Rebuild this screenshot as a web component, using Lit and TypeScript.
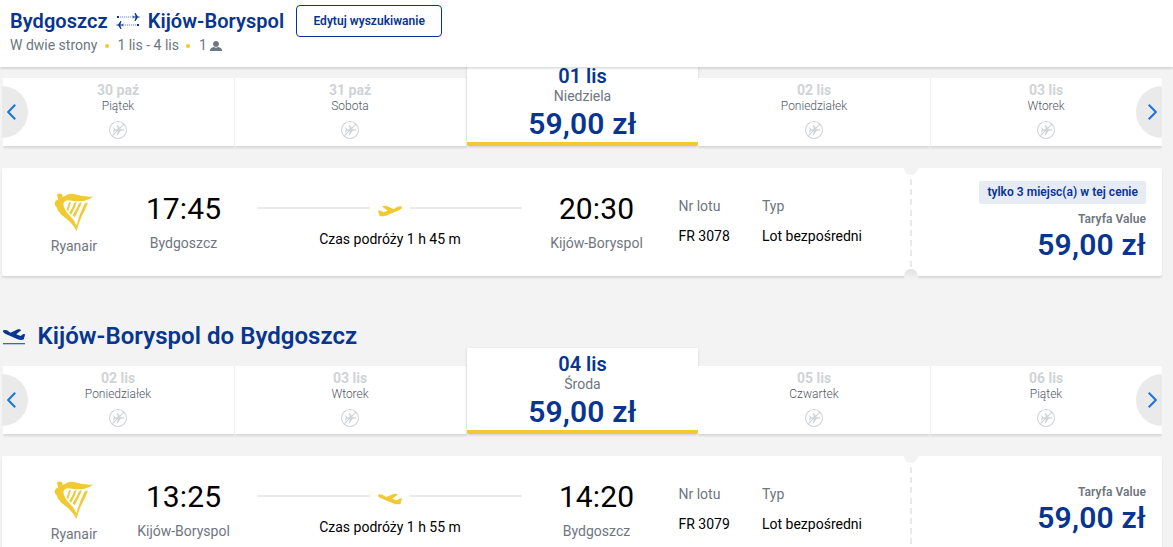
import { LitElement, html, css, svg, nothing } from "lit";
import { customElement, property } from "lit/decorators.js";
import { classMap } from "lit/directives/class-map.js";

interface Day { date: string; day: string; price?: string; }
interface Flight {
  depart: string; from: string; arrive: string; to: string;
  duration: string; no: string; price: string; left?: string; inbound?: boolean;
}

const plane = svg`<path d="M415 151L421 150L430 156L444 151L428 139L432 136L439 136L462 146L474 139Q487 136 487 142Q487 146 478 150L437 167Q427 169 420 167Z"/>`;

@customElement("date-strip")
export class DateStrip extends LitElement {
  @property({ attribute: false }) days: Day[] = [];

  static styles = css`
    :host { display: block; position: relative; width: 1160px; height: 86px; }
    .row { display: grid; grid-template-columns: 232px 232px 231px 232px 232px; align-items: end; height: 86px; padding-left: 1px; }
    .cell { height: 68px; box-sizing: border-box; background: #fff; border-right: 1px solid #f1f1f1;
      display: flex; flex-direction: column; align-items: center; padding: 4px 1px 0 0; box-shadow: 0 2px 2px rgba(0,0,0,.11); clip-path: inset(0 0 -4px 0); }
    .cell:nth-child(n+4) { border-right: none; padding-right: 0; }
    .cell:last-child { box-shadow: inset 1px 0 #f1f1f1, 0 2px 2px rgba(0,0,0,.11); }
    .date { font-size: 14px; line-height: 16px; font-weight: 700; color: #d0d3d6; }
    .day { font-size: 12px; line-height: 16px; font-weight: 300; color: #4f5865; }
    .none { width: 20px; height: 20px; margin-top: 6px; }
    .active { height: 86px; border-right: none; border-bottom: 4px solid #f1c933; padding: 6px 0 0 0; position: relative;
      box-shadow: 0 1px 3px rgba(0,0,0,.16); clip-path: none; border-radius: 0 0 2px 2px; }
    .active .date { font-size: 20px; line-height: 20px; font-weight: 600; color: #073590; }
    .active .day { font-size: 14px; line-height: 20px; font-weight: 400; color: #6e7680; }
    .price { font-size: 30px; line-height: 35px; font-weight: 600; letter-spacing: .15px; color: #073590; }
    .nav { position: absolute; top: 26px; width: 26px; height: 52px; padding: 0; border: 0; background: #eaeaea;
      display: flex; align-items: center; }
    .prev { left: 0; border-radius: 0 26px 26px 0; }
    .next { right: 0; border-radius: 26px 0 0 26px; justify-content: flex-end; }
    .nav svg { width: 9px; height: 16px; fill: none; stroke: #1a75d9; stroke-width: 2; }
    .prev svg { margin-left: 5px; }
    .next svg { margin-right: 5px; }
  `;

  render() {
    return html`
      <div class="row">
        ${this.days.map((d) => html`
          <div class=${classMap({ cell: true, active: !!d.price })}>
            <span class="date">${d.date}</span>
            <span class="day">${d.day}</span>
            ${d.price
              ? html`<span class="price">${d.price}</span>`
              : html`<svg class="none" viewBox="0 0 20 20">
                  <circle cx="10" cy="10" r="8.500" fill="none" stroke="#d2d5d8" stroke-width="1.100"/>
                  <path fill="#d2d5d8" d="M5 7.500h.9l1.300 1.700h2.600L8.900 4.800h1l2.700 4.400h2.200q1.400.3 1.400.8t-1.400.8h-2.200l-2.700 4.400h-1l.9-4.400H7.200l-1.300 1.700H5l.6-2.500z"/>
                  <path d="M4 16L16 4" stroke="#d2d5d8" stroke-width="1.100"/>
                </svg>`}
          </div>`)}
      </div>
      <button class="nav prev" aria-label="Wstecz"><svg viewBox="0 0 9 16"><path d="M8.200 .8L1.200 8l7 7.200"/></svg></button>
      <button class="nav next" aria-label="Dalej"><svg viewBox="0 0 9 16"><path d="M.8 .8L7.800 8l-7 7.200"/></svg></button>`;
  }
}

@customElement("flight-card")
export class FlightCard extends LitElement {
  @property({ attribute: false }) flight!: Flight;

  static styles = css`
    :host { display: block; width: 1160px; }
    .card { box-sizing: border-box; height: 108px; background: #fff; padding: 0 16px 0 30px; border-radius: 2px;
      box-shadow: 0 2px 2px rgba(0,0,0,.11); display: grid;
      grid-template-columns: 84px 135px 277px 137px 13.5px 83.5px 147px 3px 1fr; font-size: 14px; }
    .carrier, .stop, .route { display: flex; flex-direction: column; align-items: center; }
    .carrier { padding-top: 25px; color: #6e7680; line-height: 20px; }
    .harp { width: 40px; height: 40px; margin-bottom: 3px; }
    .stop { padding-top: 23px; color: #6e7680; line-height: 20px; }
    .time { font-size: 30px; line-height: 36px; font-weight: 370; letter-spacing: .1px; color: #000; margin-bottom: 6px; }
    .route { padding: 36px 6px 0 7px; line-height: 20px; color: #000; }
    .line { display: grid; grid-template-columns: 112px 40px 112px; grid-template-rows: 8px; align-items: center; justify-items: center; height: 8px; margin-bottom: 17px; }
    .bar { width: 100%; height: 2px; background: #e9e9e9; }
    .plane { width: 24px; height: 12px; margin-top: 5px; }
    .flip { transform: scaleX(-1); }
    .info { display: flex; flex-direction: column; gap: 10px; padding-top: 28px; line-height: 20px; color: #000; white-space: nowrap; }
    .label { color: #6e7680; }
    .tear { display: flex; flex-direction: column; align-items: center; justify-content: space-between; }
    .notch { width: 14px; height: 7px; flex: none; background: #f3f3f3; border-radius: 0 0 7px 7px; }
    .low { border-radius: 7px 7px 0 0; background: linear-gradient(#e0e0e0, #f3f3f3); height: 10px; margin-bottom: -3px; }
    .dash { width: 2px; height: 90px; margin-top: 3px; background: repeating-linear-gradient(#e9e9e9 0 6px, transparent 6px 10.2px); }
    .fare { display: flex; flex-direction: column; align-items: flex-end; justify-content: center; }
    .left { background: #e6ebf4; color: #073590; font-size: 12px; font-weight: 600; letter-spacing: .03px; line-height: 23px; padding: 0 8px; border-radius: 2px; margin-bottom: 7px; }
    .tariff { font-size: 12px; font-weight: 600; line-height: 16px; color: #6e7680; letter-spacing: .05px; }
    .price { font-size: 30px; font-weight: 600; line-height: 36px; letter-spacing: .2px; color: #073590; }
  `;

  render() {
    const f = this.flight;
    return html`<div class="card">
      <div class="carrier">
        <svg class="harp" viewBox="163 100 120 120" fill="#f1c933">
          <path d="M172 107Q173 101 181 102Q189 101 189 108L188 113Q195 109 203 105Q212 100 226 104Q250 113 280 111Q270 120 254 123Q234 127 216 123Q203 119 194 126Q189 133 194 145Q200 159 214 172Q226 184 230 198Q238 165 255 132L265 128Q257 151 248 166Q236 190 231 214Q218 191 201 178Q185 167 175 153Q173 144 168 140Q163 132 166 127Q168 121 176 120Z"/>
          <path d="M214 126L206 154L201 150Q204 136 209 128ZM231 127Q226 147 214 165L209 160Q218 145 224 129ZM247 128Q236 153 225 173L219 167Q231 149 239 130Z"/>
        </svg>
        <span>Ryanair</span>
      </div>
      <div class="stop"><span class="time">${f.depart}</span><span>${f.from}</span></div>
      <div class="route">
        <div class="line">
          <span class="bar"></span>
          <svg class=${classMap({ plane: true, flip: !!f.inbound })} viewBox="415 134 72 36" fill="#f1c933">${plane}</svg>
          <span class="bar"></span>
        </div>
        <span>${f.duration}</span>
      </div>
      <div class="stop"><span class="time">${f.arrive}</span><span>${f.to}</span></div>
      <span></span>
      <div class="info"><span class="label">Nr lotu</span><span>${f.no}</span></div>
      <div class="info"><span class="label">Typ</span><span>Lot bezpośredni</span></div>
      <div class="tear"><span class="notch"></span><span class="dash"></span><span class="notch low"></span></div>
      <div class="fare">
        ${f.left ? html`<span class="left">${f.left}</span>` : nothing}
        <span class="tariff">Taryfa Value</span>
        <span class="price">${f.price}</span>
      </div>
    </div>`;
  }
}

@customElement("app-root")
export class AppRoot extends LitElement {
  static styles = css`
    :host { display: block; width: 1173px; height: 547px; overflow: hidden; background: #f3f3f3;
      font-family: Roboto, "Liberation Sans", sans-serif; color: #073590; }
    .top { position: relative; z-index: 2; box-sizing: border-box; height: 67px; background: #fff; padding: 5px 10px 0;
      display: flex; align-items: flex-start; box-shadow: 0 1px 3px rgba(0,0,0,.2); }
    .trip { display: flex; align-items: center; font-size: 20px; font-weight: 600; letter-spacing: .05px; line-height: 24px; padding-top: 4px; }
    .swap { width: 24px; height: 18px; margin: 0 8px; }
    .meta { display: flex; align-items: center; font-size: 14px; line-height: 20px; color: #6e7680; padding-top: 2px; }
    .dot { width: 4px; height: 4px; border-radius: 50%; background: #f1c933; margin: 2px 8.5px 0 7.5px; }
    .user { width: 12px; height: 10px; margin: 2px 0 0 3px; }
    .edit { box-sizing: border-box; width: 146px; height: 32px; margin-left: 12px; padding: 0; border: 1px solid #073590; border-radius: 4px;
      background: #fff; color: #073590; font: 600 12px Roboto, sans-serif; letter-spacing: .03px; }
    .main { padding-left: 2px; }
    .first { margin-top: -7px; }
    .card { margin-top: 22px; }
    .heading { display: flex; align-items: center; height: 24px; padding-top: 48px; font-size: 24px; font-weight: 600; letter-spacing: .04px; line-height: 24px; }
    .land { width: 24px; height: 18px; margin: 2px 11.5px 0 0; }
  `;

  private out: Day[] = [
    { date: "30 paź", day: "Piątek" }, { date: "31 paź", day: "Sobota" },
    { date: "01 lis", day: "Niedziela", price: "59,00 zł" },
    { date: "02 lis", day: "Poniedziałek" }, { date: "03 lis", day: "Wtorek" },
  ];
  private back: Day[] = [
    { date: "02 lis", day: "Poniedziałek" }, { date: "03 lis", day: "Wtorek" },
    { date: "04 lis", day: "Środa", price: "59,00 zł" },
    { date: "05 lis", day: "Czwartek" }, { date: "06 lis", day: "Piątek" },
  ];
  private outFlight: Flight = {
    depart: "17:45", from: "Bydgoszcz", arrive: "20:30", to: "Kijów-Boryspol",
    duration: "Czas podróży 1 h 45 m", no: "FR 3078", price: "59,00 zł", left: "tylko 3 miejsc(a) w tej cenie",
  };
  private backFlight: Flight = {
    depart: "13:25", from: "Kijów-Boryspol", arrive: "14:20", to: "Bydgoszcz",
    duration: "Czas podróży 1 h 55 m", no: "FR 3079", price: "59,00 zł", inbound: true,
  };

  render() {
    return html`
      <header class="top">
        <div>
          <div class="trip">
            <span>Bydgoszcz</span>
            <svg class="swap" viewBox="0 0 24 18" fill="#073590">
              <rect x="1" y="4" width="2" height="2"/><rect x="21" y="12" width="2" height="2"/>
              <path d="M4 5h13M7 13h14" stroke="#9dafd3" stroke-width="1.500" stroke-dasharray="1.200 .8"/>
              <path d="M16.500 3.200l1.300 1.200h1.800L18.500 1h1l2.300 3.400h1.400q.9.6 0 1.200h-1.400L19.500 9h-1l1.100-3.400h-1.800l-1.300 1.200.5-1.800z"/>
              <path d="M7.500 11.200L6.200 12.400H4.400L5.500 9h-1l-2.300 3.400H.8q-.9.6 0 1.200h1.400L4.500 17h1l-1.100-3.400h1.800l1.300 1.200-.5-1.800z"/>
            </svg>
            <span>Kijów-Boryspol</span>
          </div>
          <div class="meta">
            <span>W dwie strony</span><span class="dot"></span><span>1 lis - 4 lis</span><span class="dot"></span><span>1</span>
            <svg class="user" viewBox="0 0 12 10" fill="#6e7680"><circle cx="6" cy="2.900" r="2.900"/><path d="M0 10V8.500Q1 6.600 4 6.100Q6 7.400 8 6.100Q11 6.600 12 8.500V10Z"/></svg>
          </div>
        </div>
        <button class="edit">Edytuj wyszukiwanie</button>
      </header>
      <main class="main">
        <date-strip class="first" .days=${this.out}></date-strip>
        <flight-card class="card" .flight=${this.outFlight}></flight-card>
        <div class="heading">
          <svg class="land" viewBox="0 0 24 18" fill="#073590">
            <g transform="translate(23.200 1) scale(-.31 .33) translate(-415 -135)">${plane}</g>
            <rect x="1" y="15" width="22" height="1.300" fill="#3f68b3"/>
          </svg>
          <span>Kijów-Boryspol do Bydgoszcz</span>
        </div>
        <date-strip .days=${this.back}></date-strip>
        <flight-card class="card" .flight=${this.backFlight}></flight-card>
      </main>`;
  }
}
